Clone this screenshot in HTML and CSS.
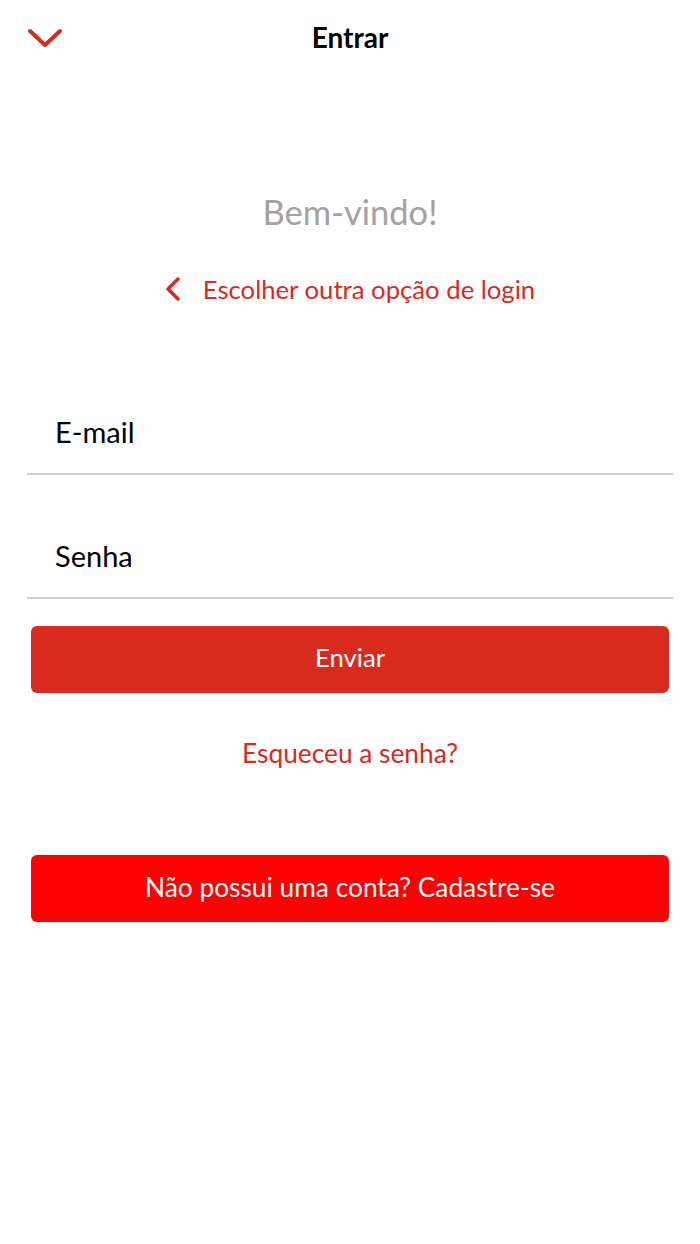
FILE: index.html
```html
<!DOCTYPE html>
<html lang="pt-BR">
<head>
    <meta charset="UTF-8">
    <meta name="viewport" content="width=device-width, initial-scale=1.0">
    <title>Entrar</title>
    <link rel="stylesheet" href="styles.css">
</head>
<body>

<header class="top-bar">
    <span class="close-icon">
        <svg width="36" height="20" viewBox="0 0 36 20">
            <path d="M3 3 L18 17 L33 3" fill="none" stroke="#d92a1e" stroke-width="4" stroke-linecap="round" stroke-linejoin="round"/>
        </svg>
    </span>
    <h1 class="title">Entrar</h1>
</header>

<main class="content">
    <p class="welcome">Bem-vindo!</p>

    <a class="back-link" href="#">
        <svg width="16" height="24" viewBox="0 0 16 24">
            <path d="M13 2 L3 12 L13 22" fill="none" stroke="#d92a1e" stroke-width="3.5" stroke-linecap="round" stroke-linejoin="round"/>
        </svg>
        <span>Escolher outra opção de login</span>
    </a>

    <form class="login-form">
        <div class="field first">
            <input type="email" placeholder="E-mail">
        </div>
        <div class="field">
            <input type="password" placeholder="Senha">
        </div>

        <button type="button" class="btn btn-send">Enviar</button>

        <a class="forgot" href="#">Esqueceu a senha?</a>

        <button type="button" class="btn btn-register">Não possui uma conta? Cadastre-se</button>
    </form>
</main>

</body>
</html>
```

FILE: styles.css
```css
body {
    font-family: Lato, "Noto Sans", sans-serif;
    background-color: #fff;
    margin: 0;
    padding: 0;
    color: #000;
}
.top-bar {
    position: relative;
    height: 76px;
    display: flex;
    align-items: center;
    justify-content: center;
}
.close-icon {
    position: absolute;
    left: 27px;
    top: 28px;
    line-height: 0;
}
.title {
    margin: 0 0 2px;
    font-size: 28px;
    font-weight: 700;
}
.content {
    display: flex;
    flex-direction: column;
    align-items: center;
}
.welcome {
    margin: 114px 0 0;
    font-size: 34.5px;
    line-height: 44px;
    color: #a6a0a2;
}
.back-link {
    display: flex;
    align-items: center;
    gap: 22px;
    margin-top: 37px;
    color: #d92a1e;
    text-decoration: none;
    font-size: 25.7px;
    line-height: 36px;
}
.back-link svg {
    display: block;
}
.login-form {
    align-self: stretch;
    display: flex;
    flex-direction: column;
    align-items: center;
    margin-top: 84px;
}
.field {
    align-self: stretch;
    margin: 0 27px;
    height: 82px;
    border-bottom: 2px solid #cfcfcf;
    display: flex;
    align-items: flex-end;
}
.field + .field {
    margin-top: 40px;
}
.field input {
    width: 100%;
    border: none;
    outline: none;
    padding: 0 0 24px 28px;
    font-family: inherit;
    font-size: 29px;
    color: #000;
    background: transparent;
}
.field input::placeholder {
    color: #000;
}
.btn {
    align-self: stretch;
    margin: 0 31px;
    height: 67px;
    padding: 0 0 5px;
    border: none;
    border-radius: 6px;
    color: #fff;
    font-family: inherit;
    font-size: 25.7px;
    cursor: pointer;
}
.btn-send {
    margin-top: 27px;
    background-color: #d92a1e;
}
.btn-register {
    margin-top: 84px;
    padding-bottom: 3px;
    font-size: 26.3px;
    background-color: #ff0000;
}
.forgot {
    margin-top: 42px;
    color: #d92a1e;
    text-decoration: none;
    font-size: 26.3px;
    line-height: 36px;
}
```
